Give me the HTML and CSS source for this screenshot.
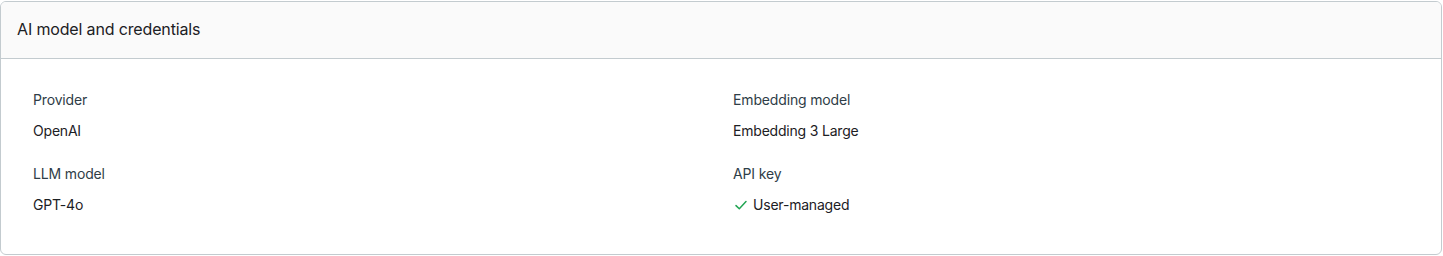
FILE: index.html
```html
<!DOCTYPE html>
<html lang="en">
<head>
  <meta charset="UTF-8">
  <meta name="viewport" content="width=device-width, initial-scale=1.0">
  <title>AI model and credentials</title>
  <link rel="stylesheet" href="styles.css">
</head>
<body>
  <section class="card">
    <header class="card-header">
      <h2>AI model and credentials</h2>
    </header>

    <div class="card-body">
      <div class="field">
        <div class="field-label">Provider</div>
        <div class="field-value">OpenAI</div>
      </div>
      <div class="field">
        <div class="field-label">Embedding model</div>
        <div class="field-value">Embedding 3 Large</div>
      </div>
      <div class="field">
        <div class="field-label">LLM model</div>
        <div class="field-value">GPT-4o</div>
      </div>
      <div class="field">
        <div class="field-label">API key</div>
        <div class="field-value with-icon">
          <svg class="check" width="14" height="14" viewBox="0 0 14 14" fill="none">
            <path d="M2 7.6 L5.3 10.8 L12 3.6" stroke="#22a553" stroke-width="1.5" stroke-linecap="round" stroke-linejoin="round"/>
          </svg>
          User-managed
        </div>
      </div>
    </div>
  </section>
</body>
</html>
```

FILE: styles.css
```css
body {
  margin: 0;
  padding: 1px 1px 0 0;
  font-family: Inter, "Noto Sans", sans-serif;
  color: #1c2024;
  background: #fff;
}

.card {
  border: 1px solid #c3cbcf;
  border-radius: 6px;
  overflow: hidden;
  height: 252px;
}

.card-header {
  background-color: #fafafa;
  border-bottom: 1px solid #c3cbcf;
  height: 56px;
  display: flex;
  align-items: center;
  padding: 0 16px;
}

.card-header h2 {
  margin: 0;
  font-size: 16px;
  font-weight: 400;
  letter-spacing: -0.15px;
  color: #1c2024;
  position: relative;
  top: -1px;
}

.card-body {
  display: grid;
  grid-template-columns: 1fr 1fr;
  column-gap: 24px;
  row-gap: 23px;
  padding: 31px 32px 0 32px;
}

.field {
  display: flex;
  flex-direction: column;
  gap: 11px;
}

.field-label {
  font-size: 14px;
  letter-spacing: -0.15px;
  line-height: 20px;
  color: #2f3d47;
}

.field-value {
  font-size: 14px;
  letter-spacing: -0.2px;
  line-height: 20px;
  color: #1c2024;
}

.with-icon {
  display: flex;
  align-items: center;
  gap: 5px;
  padding-left: 1px;
}
```
